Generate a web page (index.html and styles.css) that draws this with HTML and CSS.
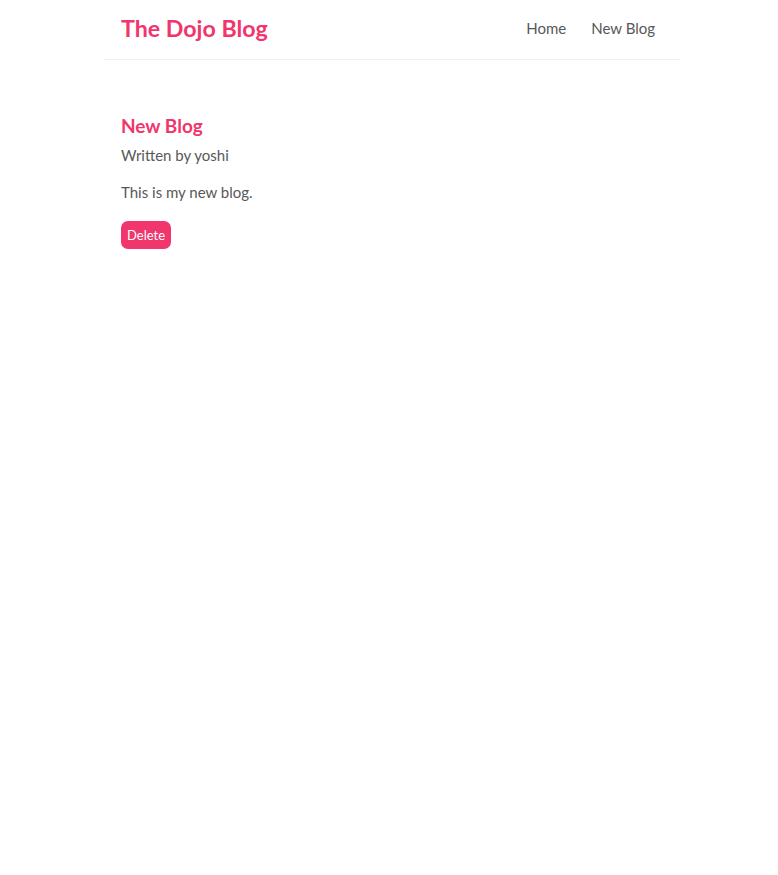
FILE: index.html
```html
<!DOCTYPE html>
<html lang="en">
<head>
<meta charset="utf-8">
<title>The Dojo Blog</title>
<link rel="stylesheet" href="styles.css">
</head>
<body>
<div class="app">
  <nav class="navbar">
    <h1>The Dojo Blog</h1>
    <div class="links">
      <a href="#">Home</a>
      <a href="#">New Blog</a>
    </div>
  </nav>
  <div class="content">
    <div class="blog-details">
      <article>
        <h2>New Blog</h2>
        <p class="author">Written by yoshi</p>
        <div class="body">This is my new blog.</div>
        <button class="delete">Delete</button>
      </article>
    </div>
  </div>
</div>
</body>
</html>
```

FILE: styles.css
```css
* {
  margin: 0;
  font-family: "Lato", "Open Sans", sans-serif;
  color: #444;
}
body {
  margin: 0;
  padding-left: 6px;
  background: #fff;
}
.navbar {
  width: 541px;
  padding: 18px 18px 18px 17px;
  margin: 0 auto;
  display: flex;
  align-items: center;
  border-bottom: 1px solid #f0f0f0;
  height: 23px;
}
.navbar h1 {
  color: #f1356d;
  font-size: 23.2px;
  font-weight: 700;
  line-height: 23px;
  margin-top: -2px;
}
.links {
  margin-left: auto;
  display: flex;
  margin-right: 2px;
  margin-top: -4px;
}
.links a {
  margin-left: 15px;
  padding: 5px;
  text-decoration: none;
  font-size: 15px;
  color: #585858;
  line-height: 18px;
}
.content {
  width: 541px;
  margin: 36px auto;
  padding: 18px 18px 18px 17px;
}
.blog-details h2 {
  font-size: 19px;
  font-weight: 700;
  color: #f1356d;
  line-height: 24px;
  margin-bottom: 7px;
}
.author {
  font-size: 15px;
  line-height: 20px;
  color: #585858;
}
.body {
  margin: 17px 0 19px;
  font-size: 15px;
  line-height: 20px;
  color: #585858;
}
.delete {
  background: #f1356d;
  color: #fff;
  border: 0;
  padding: 0 6px;
  height: 28px;
  border-radius: 7px;
  font-size: 13px;
  cursor: pointer;
}
```
